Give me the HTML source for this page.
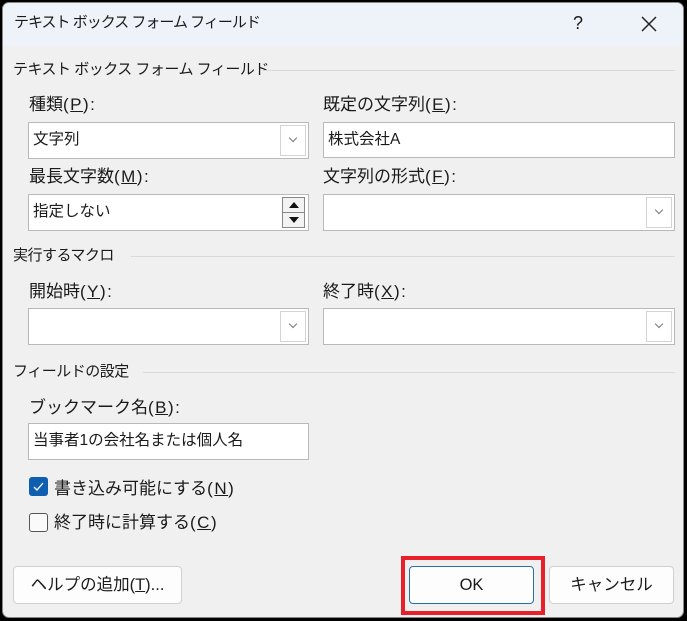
<!DOCTYPE html>
<html><head><meta charset="utf-8"><style>
*{margin:0;padding:0;box-sizing:border-box}
body{width:687px;height:621px;background:#000;position:relative;overflow:hidden;font-family:"Liberation Sans","Noto Sans CJK JP",sans-serif;font-size:16px;color:#1a1a1a}
.dlg{position:absolute;left:2px;top:2px;width:682px;height:616px;background:#f0f0f0;border-radius:7px;overflow:hidden;border:1px solid #888}
.title{position:absolute;left:0;top:0;width:100%;height:43px;background:#eef3f9}
.a{position:absolute;white-space:nowrap;line-height:20px}
.l{font-size:17px}
.l i{font-style:normal;letter-spacing:1.5px}
.g{font-size:15px;letter-spacing:-0.5px}
.line{position:absolute;height:1px;background:#d9d9d9}
.box{position:absolute;background:#fff;border:1px solid #b9b9b9}
.box span{position:absolute;left:4px;top:7px;line-height:20px;font-size:15.5px}
.dd{position:absolute;right:2px;top:2px;bottom:2px;width:26px;border:1px solid #d4d4d4;background:#fff}
.dd:after{content:"";position:absolute;left:9px;top:9px;width:5px;height:5px;border-right:1px solid #777;border-bottom:1px solid #777;transform:rotate(45deg)}
.btn{position:absolute;background:#fdfdfd;border:1px solid #d0d0d0;border-radius:4px;text-align:center;line-height:36px;font-size:16.5px}
u{text-decoration:underline}
</style></head><body>
<div class="dlg">
<div class="title"></div>
<div class="a" style="left:11px;top:10px;font-size:15px;letter-spacing:-1px">テキスト ボックス フォーム フィールド</div>
<div class="a" style="left:570px;top:10px;font-size:18px">?</div>
<svg style="position:absolute;left:637px;top:12px" width="18" height="18"><path d="M2 2L16 16M16 2L2 16" stroke="#222" stroke-width="1.5"/></svg>

<div class="a g" style="left:10px;top:57px">テキスト ボックス フォーム フィールド</div>
<div class="line" style="left:260px;top:67px;width:412px"></div>
<div class="a l" style="left:26px;top:92px">種類<i>(<u>P</u>):</i></div>
<div class="box" style="left:25px;top:119px;width:281px;height:37px"><span>文字列</span><div class="dd"></div></div>
<div class="a l" style="left:320px;top:92px">既定の文字列<i>(<u>E</u>):</i></div>
<div class="box" style="left:320px;top:119px;width:352px;height:36px"><span>株式会社A</span></div>
<div class="a l" style="left:26px;top:164px">最長文字数<i>(<u>M</u>):</i></div>
<div class="box" style="left:25px;top:191px;width:281px;height:37px"><span>指定しない</span>
<div style="position:absolute;left:253px;top:2px;width:23px;height:31px;border:1px solid #888;background:#f3f3f3">
<div style="position:absolute;left:0;top:14px;width:21px;height:1px;background:#888"></div>
<div style="position:absolute;left:6px;top:4px;border:5px solid transparent;border-bottom:6px solid #111;border-top:0"></div>
<div style="position:absolute;left:6px;top:19px;border:5px solid transparent;border-top:6px solid #111;border-bottom:0"></div></div></div>
<div class="a l" style="left:320px;top:164px">文字列の形式<i>(<u>F</u>):</i></div>
<div class="box" style="left:320px;top:191px;width:352px;height:37px"><div class="dd"></div></div>

<div class="a g" style="left:10px;top:243px">実行するマクロ</div>
<div class="line" style="left:128px;top:253px;width:544px"></div>
<div class="a l" style="left:26px;top:279px">開始時<i>(<u>Y</u>):</i></div>
<div class="box" style="left:25px;top:305px;width:281px;height:37px"><div class="dd"></div></div>
<div class="a l" style="left:320px;top:279px">終了時<i>(<u>X</u>):</i></div>
<div class="box" style="left:320px;top:305px;width:352px;height:37px"><div class="dd"></div></div>

<div class="a g" style="left:10px;top:359px">フィールドの設定</div>
<div class="line" style="left:140px;top:369px;width:532px"></div>
<div class="a l" style="left:26px;top:395px">ブックマーク名<i>(<u>B</u>):</i></div>
<div class="box" style="left:25px;top:420px;width:281px;height:37px"><span>当事者1の会社名または個人名</span></div>

<div style="position:absolute;left:26px;top:474px;width:19px;height:19px;background:#0f5fb0;border-radius:3px"></div>
<svg style="position:absolute;left:26px;top:474px" width="19" height="19"><path d="M5 10L8 13L14 6" stroke="#fff" stroke-width="1.3" fill="none"/></svg>
<div class="a l" style="left:51px;top:476px">書き込み可能にする<i>(<u>N</u>)</i></div>
<div style="position:absolute;left:26px;top:510px;width:19px;height:19px;border:1px solid #555;border-radius:3px;background:#fafafa"></div>
<div class="a l" style="left:51px;top:510px">終了時に計算する<i>(<u>C</u>)</i></div>

<div class="btn" style="left:10px;top:563px;width:169px;height:38px">ヘルプの追加(<u>T</u>)...</div>
<div style="position:absolute;left:398px;top:553px;width:144px;height:59px;border:4px solid #e8202a"></div>
<div class="btn" style="left:406px;top:563px;width:125px;height:38px;border:1px solid #2a6fa8">OK</div>
<div class="btn" style="left:546px;top:563px;width:125px;height:38px">キャンセル</div>
</div>
</body></html>
